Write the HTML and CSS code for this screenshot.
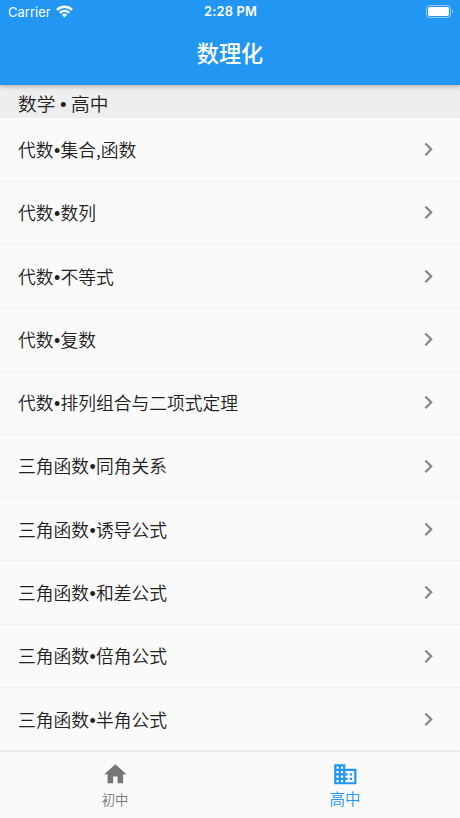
FILE: index.html
```html
<!DOCTYPE html>
<html lang="zh-CN">
<head>
<meta charset="utf-8">
<title>数理化</title>
<link rel="stylesheet" href="styles.css">
</head>
<body>
<svg class="defs" width="0" height="0"><symbol id="chevron" viewBox="0 0 24 24"><path d="M10 6 8.59 7.41 13.17 12l-4.58 4.59L10 18l6-6z"/></symbol></svg>
<div class="app">
  <header class="top">
    <div class="status">
      <div class="carrier"><span>Carrier</span>
        <svg class="wifi" viewBox="0 0 18 13"><g fill="none" stroke="#fff" stroke-width="2.5"><path d="M1 4.7a11.5 11.5 0 0 1 16 0"/><path d="M4 7.9a7.1 7.1 0 0 1 10 0"/></g><path fill="#fff" d="M6.2 9.9a4 4 0 0 1 5.6 0L9 12.8z"/></svg>
      </div>
      <div class="time">2:28 PM</div>
      <div class="power">
        <svg class="battery" viewBox="0 0 28 13"><rect x=".5" y=".5" width="24" height="12" rx="3.3" fill="none" stroke="#fff" stroke-opacity=".5"/><rect x="2" y="2" width="21" height="9" rx="2" fill="#fff"/><path d="M26 4.5v4q1.4-.6 1.4-2t-1.4-2z" fill="#fff" fill-opacity=".5"/></svg>
      </div>
    </div>
    <h1 class="title">数理化</h1>
  </header>
  <h2 class="section">数学 <span class="dot">•</span> 高中</h2>
  <main class="list">
    <div class="row"><span>代数<span class="dot">•</span>集合,函数</span><svg class="chev"><use href="#chevron"/></svg></div>
    <div class="row"><span>代数<span class="dot">•</span>数列</span><svg class="chev"><use href="#chevron"/></svg></div>
    <div class="row"><span>代数<span class="dot">•</span>不等式</span><svg class="chev"><use href="#chevron"/></svg></div>
    <div class="row"><span>代数<span class="dot">•</span>复数</span><svg class="chev"><use href="#chevron"/></svg></div>
    <div class="row"><span>代数<span class="dot">•</span>排列组合与二项式定理</span><svg class="chev"><use href="#chevron"/></svg></div>
    <div class="row"><span>三角函数<span class="dot">•</span>同角关系</span><svg class="chev"><use href="#chevron"/></svg></div>
    <div class="row"><span>三角函数<span class="dot">•</span>诱导公式</span><svg class="chev"><use href="#chevron"/></svg></div>
    <div class="row"><span>三角函数<span class="dot">•</span>和差公式</span><svg class="chev"><use href="#chevron"/></svg></div>
    <div class="row"><span>三角函数<span class="dot">•</span>倍角公式</span><svg class="chev"><use href="#chevron"/></svg></div>
    <div class="row"><span>三角函数<span class="dot">•</span>半角公式</span><svg class="chev"><use href="#chevron"/></svg></div>
  </main>
  <nav class="tabs">
    <div class="tab"><svg viewBox="0 0 24 24"><path d="M10 20v-6h4v6h5v-8h3L12 3 2 12h3v8z"/></svg><span>初中</span></div>
    <div class="tab active"><svg viewBox="0 0 24 24"><path d="M12 7V3H2v18h20V7H12zM6 19H4v-2h2v2zm0-4H4v-2h2v2zm0-4H4V9h2v2zm0-4H4V5h2v2zm4 12H8v-2h2v2zm0-4H8v-2h2v2zm0-4H8V9h2v2zm0-4H8V5h2v2zm10 12h-8v-2h2v-2h-2v-2h2v-2h-2V9h8v10zm-2-8h-2v2h2v-2zm0 4h-2v2h2v-2z"/></svg><span>高中</span></div>
  </nav>
</div>
</body>
</html>
```
FILE: styles.css
```css
* { box-sizing: border-box; }
body { margin: 0; background: #fafafa; color: #212121; font-family: "Noto Sans CJK SC", sans-serif; font-weight: 350; }
.defs { position: absolute; }
.app { height: 818px; display: flex; flex-direction: column; overflow: hidden; }
.top { flex: none; height: 84.5px; background: #2196f3; color: #fff; position: relative; z-index: 1; box-shadow: 0 1px 5px rgba(0,0,0,.32); }
.status { height: 22px; padding: 2px 6px 0 8px; display: grid; grid-template-columns: 1fr auto 1fr; align-items: center; font: 13px/20px Inter, sans-serif; }
.carrier { display: flex; align-items: center; gap: 5px; }
.wifi { width: 17px; height: 13px; position: relative; top: -1px; }
.time { font-weight: 600; font-size: 12.8px; letter-spacing: .2px; margin-left: -1px; }
.power { display: flex; justify-content: flex-end; }
.battery { width: 28px; height: 13px; position: relative; top: -1px; }
.title { margin: 0; text-align: center; font-size: 22.2px; line-height: 61px; font-weight: 500; }
.section { flex: none; margin: 0; height: 33.3px; padding-left: 18px; background: #eee; font-size: 18.7px; line-height: 36px; font-weight: inherit; }
.dot { display: inline-block; width: .39em; text-align: center; font-family: "Liberation Sans", sans-serif; line-height: 1; }
.list { flex: 1; min-height: 0; padding-top: .4px; }
.row { height: 63.33px; border-bottom: 1px solid #efefef; padding: 0 18px; display: flex; align-items: center; justify-content: space-between; font-size: 17.78px; line-height: 26px; }
.row > span { margin-top: -1px; }
.chev { width: 26.7px; height: 26.7px; fill: #878787; }
.tabs { flex: none; height: 67px; display: flex; background: #fafafa; border-top: 1px solid #ececec; box-shadow: 0 0 3px rgba(0,0,0,.05); position: relative; }
.tab { flex: 1; display: flex; flex-direction: column; align-items: center; padding-top: 9px; color: #757575; font-size: 13.3px; line-height: 20px; }
.tab svg { width: 26.7px; height: 26.7px; fill: currentColor; }
.tab span { margin-top: 2px; }
.active { color: #2196f3; font-size: 15.5px; }
.active span { margin-top: 0; }
```
